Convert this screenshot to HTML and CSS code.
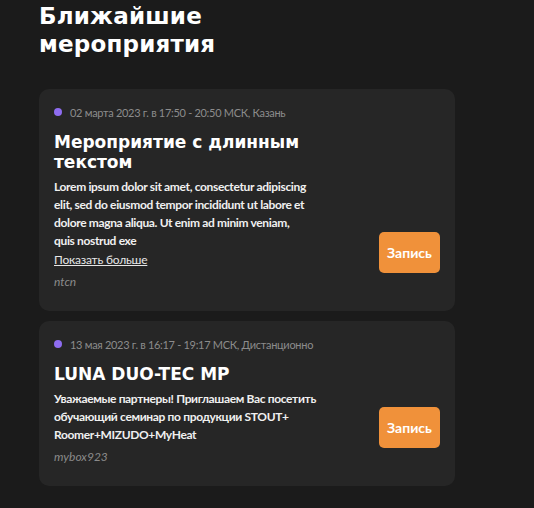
FILE: index.html
```html
<!DOCTYPE html>
<html lang="ru">
<head>
<meta charset="utf-8">
<link rel="stylesheet" href="styles.css">
</head>
<body>
<main class="page">
  <h1 class="page-title">Ближайшие<br>мероприятия</h1>
  <section class="list">
    <article class="card">
      <div class="card-main">
        <div class="meta"><span class="dot"></span><span>02 марта 2023 г. в 17:50 - 20:50 МСК, Казань</span></div>
        <h2 class="ev-title">Мероприятие с длинным текстом</h2>
        <p class="desc">Lorem ipsum dolor sit amet, consectetur adipiscing elit, sed do eiusmod tempor incididunt ut labore et dolore magna aliqua. Ut enim ad minim veniam,<br>quis nostrud exe</p>
        <a class="more" href="#">Показать больше</a>
        <div class="author">ntcn</div>
      </div>
      <button class="btn">Запись</button>
    </article>
    <article class="card">
      <div class="card-main">
        <div class="meta"><span class="dot"></span><span>13 мая 2023 г. в 16:17 - 19:17 МСК, Дистанционно</span></div>
        <h2 class="ev-title">LUNA DUO-TEC MP</h2>
        <p class="desc">Уважаемые партнеры! Приглашаем Вас посетить обучающий семинар по продукции STOUT+ Roomer+MIZUDO+MyHeat</p>
        <div class="author">mybox923</div>
      </div>
      <button class="btn">Запись</button>
    </article>
  </section>
</main>
</body>
</html>
```
FILE: styles.css
```css
html, body {
  margin: 0;
  padding: 0;
  background: #1b1b1b;
}
body {
  font-family: "Lato", "Liberation Sans", sans-serif;
  color: #f2f2f2;
}
.page {
  padding: 0 0 0 39px;
  width: 416px;
}
.page-title {
  margin: 0;
  padding-top: 2px;
  font-family: "DejaVu Sans", sans-serif;
  font-weight: 700;
  font-size: 23px;
  line-height: 28px;
  letter-spacing: 0.2px;
  color: #fff;
}
.list {
  margin-top: 31px;
  display: flex;
  flex-direction: column;
  gap: 10px;
}
.card {
  background: #262626;
  border-radius: 10px;
  padding: 16px 15px 20px 15px;
  display: flex;
  justify-content: space-between;
}
.card-main {
  width: 264px;
}
.meta {
  display: flex;
  align-items: center;
  gap: 8px;
  font-size: 11px;
  letter-spacing: -0.3px;
  color: #8c8c8c;
  height: 14px;
  white-space: nowrap;
}
.dot {
  width: 8px;
  height: 8px;
  border-radius: 50%;
  background: #8e6cf0;
  flex: none;
}
.ev-title {
  margin: 13px 0 6px;
  font-family: "DejaVu Sans", sans-serif;
  font-weight: 700;
  font-size: 17px;
  line-height: 20px;
  color: #fff;
}
.desc {
  margin: 0;
  font-size: 12px;
  line-height: 18px;
  font-weight: 700;
  letter-spacing: -0.35px;
  color: #f0f0f0;
}
.more {
  display: block;
  font-size: 12px;
  line-height: 19px;
  letter-spacing: -0.2px;
  color: #e6e6e6;
  text-decoration: underline;
}
.author {
  margin-top: 4px;
  font-size: 12px;
  line-height: 18px;
  font-style: italic;
  color: #8a8a8a;
}
.btn {
  align-self: flex-end;
  margin-bottom: 18px;
  width: 61px;
  height: 41px;
  border: 0;
  border-radius: 5px;
  background: #f0913a;
  color: #fff;
  font-family: "Lato", sans-serif;
  font-weight: 700;
  font-size: 14px;
  padding: 0;
}
```
